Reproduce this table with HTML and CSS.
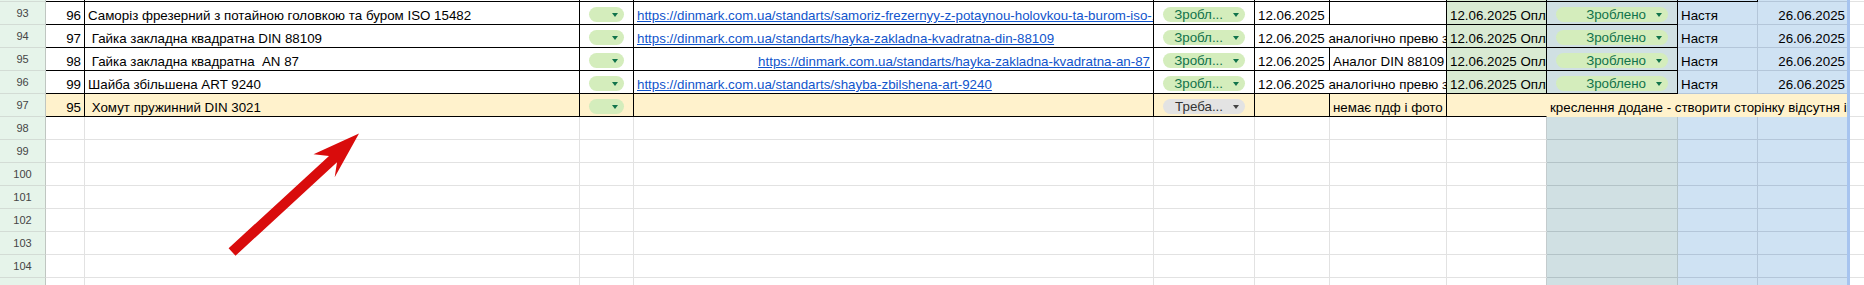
FILE: index.html
```html
<!DOCTYPE html>
<html lang="uk">
<head>
<meta charset="utf-8">
<title>Таблиця</title>
<link rel="stylesheet" href="styles.css">
</head>
<body>
<div class="sheet">
  <div class="row strip">
    <div class="c hdr"></div>
    <div class="c a bk"></div><div class="c b bk"></div><div class="c cc bk"></div><div class="c d bk"></div><div class="c e bk"></div><div class="c f bk"></div><div class="c g bk"></div><div class="c h green bk"></div><div class="c i cyan bk"></div><div class="c j blue bk"></div><div class="c k blue bl"></div><div class="edge"></div><div class="c rest"></div>
  </div>

  <div class="row">
    <div class="c hdr">93</div>
    <div class="c a bk"><span>96</span></div>
    <div class="c b bk"><span>Саморіз фрезерний з потайною головкою та буром ISO 15482</span></div>
    <div class="c cc bk"><div class="chip"><span class="tri"></span></div></div>
    <div class="c d bk"><span class="lnk">https://dinmark.com.ua/standarts/samoriz-frezernyy-z-potaynou-holovkou-ta-burom-iso-15482</span></div>
    <div class="c e bk"><div class="chip"><span>Зробл...</span><span class="tri"></span></div></div>
    <div class="c f bk"><span>12.06.2025 аналогічно превю з сайту</span></div>
    <div class="c g bk"></div>
    <div class="c h green bk"><span>12.06.2025 Оплачено</span></div>
    <div class="c i cyan bk"><div class="chip"><span>Зроблено</span><span class="tri"></span></div></div>
    <div class="c j blue bl"><span>Настя</span></div>
    <div class="c k blue bl"><span>26.06.2025</span></div>
    <div class="edge"></div>
    <div class="c rest"></div>
  </div>

  <div class="row">
    <div class="c hdr">94</div>
    <div class="c a bk"><span>97</span></div>
    <div class="c b bk"><span> Гайка закладна квадратна DIN 88109</span></div>
    <div class="c cc bk"><div class="chip"><span class="tri"></span></div></div>
    <div class="c d bk"><span class="lnk">https://dinmark.com.ua/standarts/hayka-zakladna-kvadratna-din-88109</span></div>
    <div class="c e bk"><div class="chip"><span>Зробл...</span><span class="tri"></span></div></div>
    <div class="c fg bk"><span>12.06.2025 аналогічно превю з сайту</span></div>
    <div class="c h green bk"><span>12.06.2025 Оплачено</span></div>
    <div class="c i cyan bk"><div class="chip"><span>Зроблено</span><span class="tri"></span></div></div>
    <div class="c j blue bl"><span>Настя</span></div>
    <div class="c k blue bl"><span>26.06.2025</span></div>
    <div class="edge"></div>
    <div class="c rest"></div>
  </div>

  <div class="row">
    <div class="c hdr">95</div>
    <div class="c a bk"><span>98</span></div>
    <div class="c b bk"><span> Гайка закладна квадратна  AN 87</span></div>
    <div class="c cc bk"><div class="chip"><span class="tri"></span></div></div>
    <div class="c d bk right"><span class="lnk">https://dinmark.com.ua/standarts/hayka-zakladna-kvadratna-an-87</span></div>
    <div class="c e bk"><div class="chip"><span>Зробл...</span><span class="tri"></span></div></div>
    <div class="c f bk"><span>12.06.2025 аналогічно превю з сайту</span></div>
    <div class="c g bk"><span>Аналог DIN 88109</span></div>
    <div class="c h green bk"><span>12.06.2025 Оплачено</span></div>
    <div class="c i cyan bk"><div class="chip"><span>Зроблено</span><span class="tri"></span></div></div>
    <div class="c j blue bl"><span>Настя</span></div>
    <div class="c k blue bl"><span>26.06.2025</span></div>
    <div class="edge"></div>
    <div class="c rest"></div>
  </div>

  <div class="row">
    <div class="c hdr">96</div>
    <div class="c a bk"><span>99</span></div>
    <div class="c b bk"><span>Шайба збільшена ART 9240</span></div>
    <div class="c cc bk"><div class="chip"><span class="tri"></span></div></div>
    <div class="c d bk"><span class="lnk">https://dinmark.com.ua/standarts/shayba-zbilshena-art-9240</span></div>
    <div class="c e bk"><div class="chip"><span>Зробл...</span><span class="tri"></span></div></div>
    <div class="c fg bk"><span>12.06.2025 аналогічно превю з сайту</span></div>
    <div class="c h green bk"><span>12.06.2025 Оплачено</span></div>
    <div class="c i cyan bk"><div class="chip"><span>Зроблено</span><span class="tri"></span></div></div>
    <div class="c j blue bl"><span>Настя</span></div>
    <div class="c k blue bl"><span>26.06.2025</span></div>
    <div class="edge"></div>
    <div class="c rest"></div>
  </div>

  <div class="row">
    <div class="c hdr">97</div>
    <div class="c a yellow bk"><span>95</span></div>
    <div class="c b yellow bk"><span> Хомут пружинний DIN 3021</span></div>
    <div class="c cc yellow bk"><div class="chip"><span class="tri"></span></div></div>
    <div class="c d yellow bk"></div>
    <div class="c e yellow bk"><div class="chip gray"><span>Треба...</span><span class="tri"></span></div></div>
    <div class="c f yellow bk"></div>
    <div class="c g yellow bk"><span>немає пдф і фото</span></div>
    <div class="c h yellow bk nor"></div>
    <div class="c ijk yellow ybot"><span>креслення додане - створити сторінку відсутня інформація</span></div>
    <div class="edge"></div>
    <div class="c rest"></div>
  </div>

  <div class="row">
    <div class="c hdr">98</div>
    <div class="c a"></div><div class="c b"></div><div class="c cc"></div><div class="c d"></div><div class="c e"></div><div class="c f"></div><div class="c g"></div><div class="c h hsep"></div><div class="c i cyan cyb"></div><div class="c j blue bl"></div><div class="c k blue bl"></div><div class="edge"></div><div class="c rest"></div>
  </div>
  <div class="row">
    <div class="c hdr">99</div>
    <div class="c a"></div><div class="c b"></div><div class="c cc"></div><div class="c d"></div><div class="c e"></div><div class="c f"></div><div class="c g"></div><div class="c h hsep"></div><div class="c i cyan cyb"></div><div class="c j blue bl"></div><div class="c k blue bl"></div><div class="edge"></div><div class="c rest"></div>
  </div>
  <div class="row">
    <div class="c hdr">100</div>
    <div class="c a"></div><div class="c b"></div><div class="c cc"></div><div class="c d"></div><div class="c e"></div><div class="c f"></div><div class="c g"></div><div class="c h hsep"></div><div class="c i cyan cyb"></div><div class="c j blue bl"></div><div class="c k blue bl"></div><div class="edge"></div><div class="c rest"></div>
  </div>
  <div class="row">
    <div class="c hdr">101</div>
    <div class="c a"></div><div class="c b"></div><div class="c cc"></div><div class="c d"></div><div class="c e"></div><div class="c f"></div><div class="c g"></div><div class="c h hsep"></div><div class="c i cyan cyb"></div><div class="c j blue bl"></div><div class="c k blue bl"></div><div class="edge"></div><div class="c rest"></div>
  </div>
  <div class="row">
    <div class="c hdr">102</div>
    <div class="c a"></div><div class="c b"></div><div class="c cc"></div><div class="c d"></div><div class="c e"></div><div class="c f"></div><div class="c g"></div><div class="c h hsep"></div><div class="c i cyan cyb"></div><div class="c j blue bl"></div><div class="c k blue bl"></div><div class="edge"></div><div class="c rest"></div>
  </div>
  <div class="row">
    <div class="c hdr">103</div>
    <div class="c a"></div><div class="c b"></div><div class="c cc"></div><div class="c d"></div><div class="c e"></div><div class="c f"></div><div class="c g"></div><div class="c h hsep"></div><div class="c i cyan cyb"></div><div class="c j blue bl"></div><div class="c k blue bl"></div><div class="edge"></div><div class="c rest"></div>
  </div>
  <div class="row">
    <div class="c hdr">104</div>
    <div class="c a"></div><div class="c b"></div><div class="c cc"></div><div class="c d"></div><div class="c e"></div><div class="c f"></div><div class="c g"></div><div class="c h hsep"></div><div class="c i cyan cyb"></div><div class="c j blue bl"></div><div class="c k blue bl"></div><div class="edge"></div><div class="c rest"></div>
  </div>
  <div class="row">
    <div class="c hdr">105</div>
    <div class="c a"></div><div class="c b"></div><div class="c cc"></div><div class="c d"></div><div class="c e"></div><div class="c f"></div><div class="c g"></div><div class="c h hsep"></div><div class="c i cyan cyb"></div><div class="c j blue bl"></div><div class="c k blue bl"></div><div class="edge"></div><div class="c rest"></div>
  </div>

  <svg class="arrow" width="1864" height="285" viewBox="0 0 1864 285" aria-hidden="true">
    <polygon points="228.6,248.3 329,156 313.5,154.3 359,133.5 334.7,177.3 337,162.3 235.5,255.7" fill="#d90c0c"/>
  </svg>
</div>
</body>
</html>
```

FILE: styles.css
```css
* { box-sizing: border-box; }
html, body { margin: 0; padding: 0; background: #fff; }
body {
  width: 1864px;
  height: 285px;
  overflow: hidden;
  font-family: "Liberation Sans", Arial, sans-serif;
}
.sheet {
  position: relative;
  width: 1864px;
  height: 285px;
  overflow: hidden;
}
.row { display: flex; height: 23px; }
.row.strip { height: 2px; }

.c {
  flex: none;
  height: 100%;
  border-right: 1px solid #e2e2e2;
  border-bottom: 1px solid #e2e2e2;
  overflow: hidden;
  white-space: nowrap;
  display: flex;
  align-items: flex-end;
  padding: 0 3px;
  font-size: 13.333px;
  line-height: 16px;
  color: #000;
  background: #fff;
}
.c span { white-space: pre; }

.hdr {
  width: 46px;
  background: #e6f4ea;
  border-right-color: #bfc6c1;
  border-bottom-color: #d3dcd5;
  justify-content: center;
  align-items: center;
  padding: 1px 0 0;
  font-size: 11px;
  line-height: 13px;
  color: #454545;
}
.a { width: 39px; justify-content: flex-end; }
.b { width: 495px; }
.cc { width: 54px; padding: 0; }
.d { width: 520px; }
.e { width: 101px; padding: 0; }
.f { width: 75px; }
.g { width: 117px; }
.fg { width: 192px; }
.h { width: 100px; }
.i { width: 131px; padding: 0; }
.j { width: 80px; }
.k { width: 89px; border-right: none; justify-content: flex-end; padding-right: 2px; }
.ijk { width: 300px; border-right: none; }
.rest { flex: 1; border-right: none; }
.right { justify-content: flex-end; }

.edge { flex: none; width: 3px; height: 100%; background: #a7c4ef; }

.green { background: #d9ead3; }
.cyan { background: #d0e0e3; }
.blue { background: #cfe2f3; }
.yellow { background: #fff2cc; }

.bk { border-right-color: #000; border-bottom-color: #000; }
.bl { border-right-color: #b4c6d9; border-bottom-color: #b4c6d9; }
.cyb { border-right-color: #b3c3c7; border-bottom-color: #b3c3c7; }
.hsep { border-right-color: #c3cbcd; }
.ybot { border-bottom-color: transparent; }
.nor { border-right-color: transparent; }

.lnk { color: #1155cc; text-decoration: underline; }

.chip {
  flex: 1;
  height: 15px;
  margin: 0 9px 2px;
  border-radius: 8px;
  background: #d4edbc;
  color: #11734b;
  display: flex;
  align-items: center;
  justify-content: flex-end;
  gap: 10px;
  padding-right: 6px;
  font-size: 13.333px;
  line-height: 15px;
  overflow: hidden;
}
.chip.gray { background: #e3e3e3; color: #333; }
.tri {
  flex: none;
  width: 0;
  height: 0;
  border-left: 3.5px solid transparent;
  border-right: 3.5px solid transparent;
  border-top: 4px solid #11734b;
}
.chip.gray .tri { border-top-color: #444; }

.arrow {
  position: absolute;
  left: 0;
  top: 0;
  pointer-events: none;
}
```
